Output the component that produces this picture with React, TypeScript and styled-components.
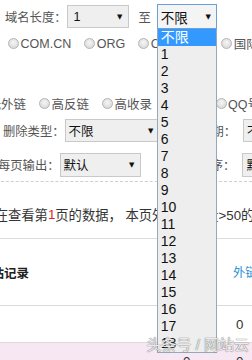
import styled, { createGlobalStyle } from "styled-components";

const GlobalStyle = createGlobalStyle`
  html, body {
    margin: 0;
    padding: 0;
    background: #fff;
  }
  body {
    font-family: "Liberation Sans", "Noto Sans CJK SC", sans-serif;
  }
`;

const lengthOptions = ["不限", ...Array.from({ length: 18 }, (_, i) => String(i + 1))];
const suffixes = ["COM.CN", "ORG", "COM.NET", "国际域名"];
const linkTypes = ["低外链", "高反链", "高收录", "百度", "QQ号"];

export default function App() {
  return (
    <>
      <GlobalStyle />
      <Style.Page>
        <Style.FilterRow $h={33} $indent={5}>
          <Style.Label>域名长度：</Style.Label>
          <Style.Select $w={62} $pad={6}>
            <span>1</span>
            <Style.Arrow>▼</Style.Arrow>
          </Style.Select>
          <Style.Label $gap={10}>至</Style.Label>
          <Style.SelectWrap $gap={6}>
            <Style.Select $w={60} $h={25} $focused>
              <span>不限</span>
              <Style.Arrow>▼</Style.Arrow>
            </Style.Select>
            <Style.Dropdown>
              {lengthOptions.map((o, i) => (
                <Style.Option key={o} $active={i === 0}>
                  {o}
                </Style.Option>
              ))}
            </Style.Dropdown>
          </Style.SelectWrap>
        </Style.FilterRow>

        <Style.FilterRow $h={21} $indent={8}>
          {suffixes.map((t) => (
            <Style.Radio key={t}>
              <Style.Dot />
              {t}
            </Style.Radio>
          ))}
        </Style.FilterRow>

        <Style.FilterRow $h={20} $indent={-24} $top={39}>
          {linkTypes.map((t) => (
            <Style.Radio key={t}>
              <Style.Dot />
              {t}
            </Style.Radio>
          ))}
        </Style.FilterRow>

        <Style.FilterRow $h={35} $indent={3}>
          <Style.Label>删除类型：</Style.Label>
          <Style.Select $w={95}>
            <span>不限</span>
            <Style.Arrow>▼</Style.Arrow>
          </Style.Select>
          <Style.Label $gap={15}>注册日期：</Style.Label>
          <Style.Select $w={80} $gap={7}>
            <span>不限</span>
            <Style.Arrow>▼</Style.Arrow>
          </Style.Select>
        </Style.FilterRow>

        <Style.FilterRow $h={33} $indent={-2}>
          <Style.Label>每页输出：</Style.Label>
          <Style.Select $w={81} $h={24}>
            <span>默认</span>
            <Style.Arrow>▼</Style.Arrow>
          </Style.Select>
          <Style.Label $gap={58}>排序：</Style.Label>
          <Style.Select $w={80} $h={24} $gap={7}>
            <span>默认</span>
            <Style.Arrow>▼</Style.Arrow>
          </Style.Select>
        </Style.FilterRow>

        <Style.Summary>
          正在查看第<em>1</em>页的数据， 本页外链总数量&gt;50的域名共有12个
        </Style.Summary>

        <Style.TableRow $h={66}>
          <Style.Title>网站记录</Style.Title>
          <span />
          <Style.Cell $indent={1} $link>
            外链数
          </Style.Cell>
        </Style.TableRow>
        <Style.TableRow $h={36}>
          <span />
          <Style.Cell $indent={7}>0</Style.Cell>
          <Style.Cell $indent={4}>0</Style.Cell>
        </Style.TableRow>
        <Style.TableRow $h={36} $alt>
          <span />
          <Style.Cell $indent={7}>0</Style.Cell>
          <Style.Cell $indent={4}>0</Style.Cell>
        </Style.TableRow>

        <Style.Watermark>头条号 / 网站云</Style.Watermark>
      </Style.Page>
    </>
  );
}

const Style = {
  Page: styled.div`
    position: relative;
    width: 252px;
    height: 360px;
    overflow: hidden;
    display: flex;
    flex-direction: column;
  `,

  FilterRow: styled.div<{ $h: number; $indent: number; $top?: number }>`
    display: flex;
    align-items: center;
    flex-shrink: 0;
    height: ${(p) => p.$h}px;
    margin-top: ${(p) => p.$top ?? 0}px;
    margin-left: ${(p) => p.$indent}px;
    white-space: nowrap;

    & > * {
      flex-shrink: 0;
    }
  `,

  Label: styled.span<{ $gap?: number }>`
    margin-left: ${(p) => p.$gap ?? 0}px;
    font-size: 12.3px;
    color: #555;
  `,

  SelectWrap: styled.div<{ $gap?: number }>`
    position: relative;
    margin-left: ${(p) => p.$gap ?? 0}px;
  `,

  Select: styled.div<{ $w: number; $h?: number; $gap?: number; $pad?: number; $focused?: boolean }>`
    display: flex;
    align-items: center;
    justify-content: space-between;
    box-sizing: border-box;
    width: ${(p) => p.$w}px;
    height: ${(p) => p.$h ?? 23}px;
    margin-left: ${(p) => p.$gap ?? 0}px;
    padding: 0 5px 0 ${(p) => p.$pad ?? 3}px;
    background: ${(p) => (p.$focused ? "#f4f4f4" : "#efefef")};
    border: 1px solid ${(p) => (p.$focused ? "#6a9fd8" : "#c9c9c9")};
    font-size: ${(p) => (p.$focused ? 13.5 : 12.5)}px;
    color: #111;
  `,

  Arrow: styled.span`
    font-family: "DejaVu Sans", sans-serif;
    font-size: 7px;
    color: #111;
  `,

  Dropdown: styled.ul`
    position: absolute;
    top: 100%;
    left: 0;
    z-index: 2;
    box-sizing: border-box;
    width: 100%;
    margin: 0;
    padding: 0;
    list-style: none;
    background: #eeeeee;
    border: 1px solid #98a7bd;
    border-top: none;
  `,

  Option: styled.li<{ $active?: boolean }>`
    height: 17px;
    line-height: 17px;
    padding-left: 3px;
    font-size: 14px;
    color: ${(p) => (p.$active ? "#fff" : "#111")};
    background: ${(p) => (p.$active ? "#3399ff" : "transparent")};
  `,

  Radio: styled.label`
    display: flex;
    align-items: center;
    margin-right: 13px;
    font-size: 12.5px;
    color: #555;
  `,

  Dot: styled.span`
    box-sizing: border-box;
    width: 11px;
    height: 11px;
    margin-right: 1.5px;
    border-radius: 50%;
    border: 1px solid #b4b4b4;
    background: radial-gradient(circle at 50% 40%, #f6f6f6, #d2d2d2);
  `,

  Summary: styled.div`
    flex-shrink: 0;
    height: 48px;
    padding-top: 8px;
    margin-left: -18.6px;
    display: flex;
    align-items: center;
    border-top: 1px dashed #cfcfcf;
    border-bottom: 1px solid #dcdcdc;
    font-size: 13.3px;
    color: #333;
    white-space: nowrap;

    em {
      font-style: normal;
      color: #e0242b;
    }
  `,

  TableRow: styled.div<{ $h: number; $alt?: boolean }>`
    flex-shrink: 0;
    display: grid;
    grid-template-columns: 176px 56px 1fr;
    align-items: center;
    height: ${(p) => p.$h}px;
    background: ${(p) => (p.$alt ? "#f6e7f3" : "#fff")};
    border-bottom: 1px solid #dadada;
    font-size: 13.3px;
    color: #333;
  `,

  Title: styled.span`
    margin-left: -21px;
    font-size: 12.5px;
    font-weight: bold;
    color: #222;
    white-space: nowrap;
  `,

  Cell: styled.span<{ $indent: number; $link?: boolean }>`
    padding-left: ${(p) => p.$indent}px;
    color: ${(p) => (p.$link ? "#2b93d6" : "#333")};
    font-size: ${(p) => (p.$link ? 12.3 : 13.3)}px;
    white-space: nowrap;
  `,

  Watermark: styled.div`
    position: absolute;
    right: 3px;
    bottom: 6px;
    z-index: 3;
    font-size: 15px;
    color: rgba(255, 255, 255, 0.85);
    text-shadow: 0 0 1px #777, 0 0 1px #777;
    white-space: nowrap;
  `,
};
